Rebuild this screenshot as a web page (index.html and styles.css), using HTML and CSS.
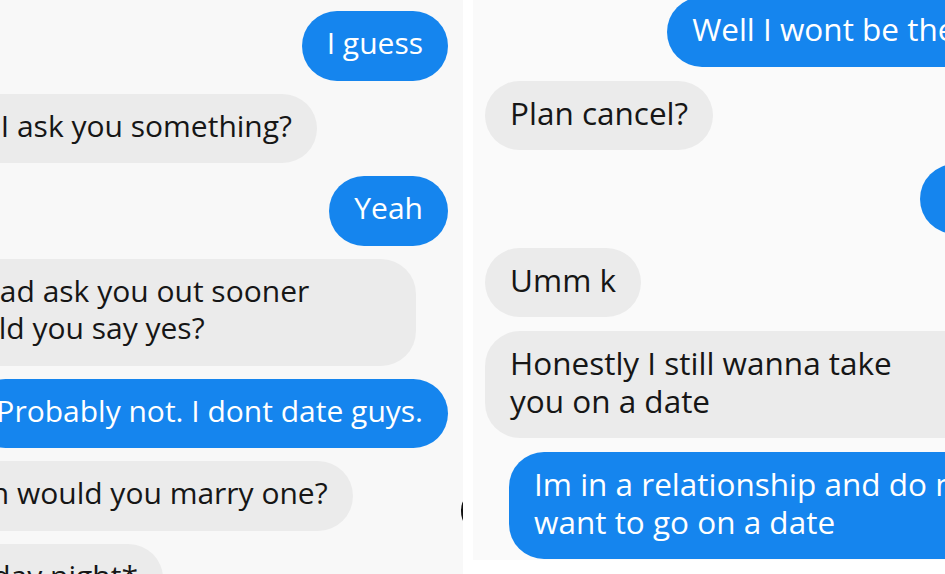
FILE: index.html
```html
<!DOCTYPE html>
<html lang="en">
<head>
<meta charset="utf-8">
<title>Chat screenshots</title>
<link rel="stylesheet" href="styles.css">
</head>
<body>
<main class="page">
  <section class="panel panel-left">
    <div class="thread thread-left">
      <div class="bubble out">I guess</div>
      <div class="bubble in">Can I ask you something?</div>
      <div class="bubble out">Yeah</div>
      <div class="bubble in wide">If I had ask you out sooner<br>would you say yes?</div>
      <div class="bubble out">Probably not. I dont date guys.</div>
      <div class="bubble in">Then would you marry one?</div>
      <div class="bubble in">Sunday night*</div>
    </div>
    <span class="cut-glyph"></span>
  </section>
  <section class="panel panel-right">
    <div class="thread thread-right">
      <div class="bubble out">Well I wont be there</div>
      <div class="bubble in">Plan cancel?</div>
      <div class="bubble out">Ok</div>
      <div class="bubble in">Umm k</div>
      <div class="bubble in wide">Honestly I still wanna take<br>you on a date</div>
      <div class="bubble out wide">Im in a relationship and do not<br>want to go on a date</div>
    </div>
  </section>
</main>
</body>
</html>
```

FILE: styles.css
```css
* { box-sizing: border-box; }

html, body {
  margin: 0;
  padding: 0;
  background: #ffffff;
}

.page {
  display: flex;
  align-items: flex-start;
  gap: 10px;
  width: 945px;
  height: 574px;
  overflow: hidden;
  background: #ffffff;
  font-family: "Open Sans", "Noto Sans", sans-serif;
  font-size: 30px;
}

.panel {
  position: relative;
  flex: none;
  overflow: hidden;
}

.panel-left {
  width: 463px;
  height: 574px;
  background: #f8f8f8;
}

.panel-right {
  width: 472px;
  height: 560px;
  background: #fafafa;
  font-size: 31.5px;
}

.thread {
  display: flex;
  flex-direction: column;
}

.thread-left {
  gap: 13px;
  padding: 11px 15px 0 0;
  margin-left: -86px;
}

.thread-left .bubble {
  padding-top: 13px;
  padding-bottom: 19px;
}

.thread-right {
  gap: 14px;
  width: 538px;
  margin-top: -3px;
  padding-left: 12px;
}

.thread-right .bubble {
  padding-top: 13px;
  padding-bottom: 19px;
}

.bubble {
  padding: 16px 25px;
  line-height: 37.5px;
  border-radius: 35px;
  white-space: nowrap;
}

.bubble.wide {
  width: 502px;
}

.bubble.in {
  align-self: flex-start;
  background: #ebebeb;
  color: #161616;
}

.bubble.out {
  align-self: flex-end;
  background: #1585ee;
  color: #ffffff;
}

.cut-glyph {
  position: absolute;
  left: 461px;
  top: 500px;
  width: 8px;
  height: 22px;
  border-left: 2px solid #111;
  border-radius: 50%;
}
```
